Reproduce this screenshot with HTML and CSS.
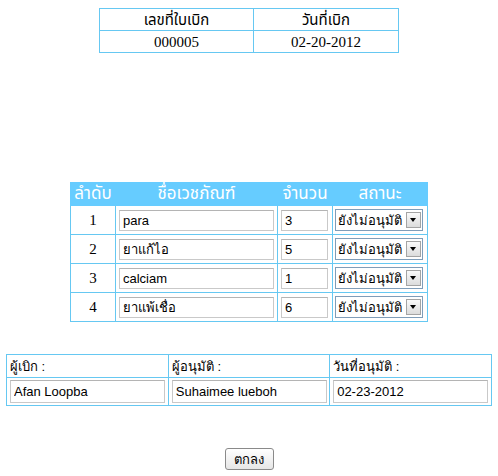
FILE: index.html
```html
<!DOCTYPE html>
<html lang="th">
<head>
<meta charset="utf-8">
<title>ใบเบิกเวชภัณฑ์</title>
<link rel="stylesheet" href="styles.css">
</head>
<body>
<div class="page">
  <table class="doc">
    <tr><td class="c1">เลขที่ใบเบิก</td><td class="c2">วันที่เบิก</td></tr>
    <tr><td>000005</td><td>02-20-2012</td></tr>
  </table>

  <table class="items">
    <tr class="head">
      <th class="w-no">ลำดับ</th><th class="w-name">ชื่อเวชภัณฑ์</th><th class="w-qty">จำนวน</th><th class="w-st">สถานะ</th>
    </tr>
    <tr>
      <td class="no">1</td>
      <td><input class="in-name" type="text" value="para"></td>
      <td><input class="in-qty" type="text" value="3"></td>
      <td><span class="sel"><span class="sel-text">ยังไม่อนุมัติ</span><span class="sel-btn"></span></span></td>
    </tr>
    <tr>
      <td class="no">2</td>
      <td><input class="in-name" type="text" value="ยาแก้ไอ"></td>
      <td><input class="in-qty" type="text" value="5"></td>
      <td><span class="sel"><span class="sel-text">ยังไม่อนุมัติ</span><span class="sel-btn"></span></span></td>
    </tr>
    <tr>
      <td class="no">3</td>
      <td><input class="in-name" type="text" value="calciam"></td>
      <td><input class="in-qty" type="text" value="1"></td>
      <td><span class="sel"><span class="sel-text">ยังไม่อนุมัติ</span><span class="sel-btn"></span></span></td>
    </tr>
    <tr>
      <td class="no">4</td>
      <td><input class="in-name" type="text" value="ยาแพ้เชื่อ"></td>
      <td><input class="in-qty" type="text" value="6"></td>
      <td><span class="sel"><span class="sel-text">ยังไม่อนุมัติ</span><span class="sel-btn"></span></span></td>
    </tr>
  </table>

  <table class="people">
    <tr class="lbl"><td class="p1">ผู้เบิก :</td><td class="p2">ผู้อนุมัติ :</td><td class="p3">วันที่อนุมัติ :</td></tr>
    <tr class="vals">
      <td><input class="in-p" type="text" value="Afan Loopba"></td>
      <td><input class="in-p" type="text" value="Suhaimee lueboh"></td>
      <td><input class="in-p" type="text" value="02-23-2012"></td>
    </tr>
  </table>

  <button class="ok" type="button">ตกลง</button>
</div>
</body>
</html>
```

FILE: styles.css
```css
html, body {
  margin: 0;
  padding: 0;
  background: #ffffff;
}

.page {
  display: flex;
  flex-direction: column;
  align-items: center;
  padding-top: 8px;
  font-family: "Liberation Serif", "Noto Sans Thai", serif;
  color: #000;
}

table {
  border-collapse: collapse;
}

td, th {
  border: 1px solid #66c8f2;
  padding: 0;
}

/* top document table */
.doc {
  width: 300px;
  font-size: 15px;
  text-align: center;
}
.doc td {
  height: 21px;
  line-height: 20px;
}
.doc .c1 { width: 153px; }
.doc .c2 { width: 144px; }

/* items table */
.items {
  margin-top: 129px;
  width: 358px;
}
.items .head th {
  background: #66ccff;
  color: #ffffff;
  font-weight: normal;
  font-size: 17px;
  height: 22px;
  line-height: 20px;
  border-color: #66ccff;
  text-align: center;
}
.items .w-no { width: 44px; }
.items .w-name { width: 161px; }
.items .w-qty { width: 54px; }
.items .w-st { width: 94px; }

.items td {
  height: 28px;
  font-size: 15px;
}
.items td.no {
  text-align: center;
}
.items td:nth-child(2) { padding-left: 3px; }
.items td:nth-child(3) { padding-left: 3px; }
.items td:nth-child(4) { padding-left: 2px; }

input {
  box-sizing: border-box;
  font-family: "Liberation Sans", Tahoma, sans-serif;
  font-size: 13px;
  color: #000;
  border: 1px solid #c9c9c9;
  border-top-color: #b4b4b4;
  padding: 0 3px;
  margin: 0;
  background: #fff;
  display: block;
}

.in-name { width: 155px; height: 21px; }
.in-qty { width: 47px; height: 21px; }

.sel {
  box-sizing: border-box;
  display: flex;
  align-items: center;
  width: 88px;
  height: 22px;
  border: 1px solid #7f9db9;
  background: #fff;
  font-family: "Liberation Sans", Tahoma, sans-serif;
  font-size: 13px;
  padding-left: 2px;
  position: relative;
}
.sel-text {
  white-space: nowrap;
  overflow: hidden;
  flex: 1;
}
.sel-btn {
  flex: none;
  width: 15px;
  height: 16px;
  margin-right: 1px;
  box-sizing: border-box;
  border: 1px solid #a4a4a4;
  background: linear-gradient(#fafafa, #dcdcdc);
  position: relative;
}
.sel-btn::after {
  content: "";
  position: absolute;
  left: 3px;
  top: 5px;
  border-left: 3.5px solid transparent;
  border-right: 3.5px solid transparent;
  border-top: 4px solid #000;
}

/* people table */
.people {
  margin-top: 32px;
  width: 486px;
  font-family: "Liberation Sans", Tahoma, sans-serif;
  font-size: 13px;
}
.people .p1 { width: 161px; }
.people .p2 { width: 160px; }
.people .p3 { width: 161px; }
.people .lbl td {
  height: 22px;
  padding-left: 3px;
  vertical-align: middle;
}
.people .vals td {
  height: 27px;
  padding-left: 3px;
}
.in-p {
  width: 155px;
  height: 23px;
}

.ok {
  margin-top: 42px;
  width: 49px;
  height: 22px;
  padding: 0;
  font-family: "Liberation Sans", Tahoma, sans-serif;
  font-size: 13px;
  color: #000;
  border: 1px solid #8a8a8a;
  border-radius: 3px;
  background: linear-gradient(#ffffff, #e6e6e6);
}
```
